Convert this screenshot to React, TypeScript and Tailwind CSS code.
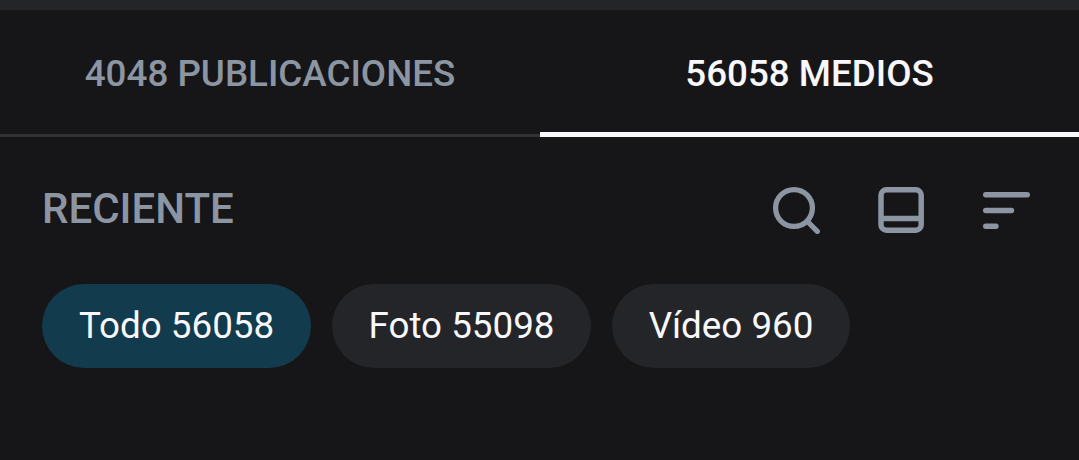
const tabs = [
  { label: "4048 PUBLICACIONES", active: false },
  { label: "56058 MEDIOS", active: true },
];

const filters = [
  { label: "Todo 56058", width: "w-[269px]", active: true },
  { label: "Foto 55098", width: "w-[259px]", active: false },
  { label: "Vídeo 960", width: "w-[238px]", active: false },
];

function SearchIcon() {
  return (
    <svg width="50" height="50" viewBox="0 0 50 50" fill="none" stroke="currentColor" strokeWidth="5.3" strokeLinecap="round">
      <circle cx="22" cy="23" r="18.4" />
      <path d="M35.5 36.5L45.3 46.3" />
    </svg>
  );
}

function LayoutIcon() {
  return (
    <svg width="46" height="46" viewBox="0 0 46 46" fill="none" stroke="currentColor" strokeWidth="5.5">
      <rect x="3" y="2.75" width="40.2" height="40.4" rx="5.5" />
      <path d="M3 31.5H43" />
    </svg>
  );
}

function SortIcon() {
  return (
    <svg width="48" height="40" viewBox="0 0 48 40" fill="none" stroke="currentColor" strokeWidth="5.4" strokeLinecap="round">
      <path d="M3.7 4.7H45.3M3.7 20.5H29.5M3.7 36.3H14" />
    </svg>
  );
}

export default function App() {
  return (
    <main className="h-[460px] w-[1079px] overflow-hidden bg-[#161618] font-['Roboto',sans-serif]">
      <div className="h-2.5 bg-[#242529]" />

      <nav className="grid h-[127px] grid-cols-[540px_539px]">
        {tabs.map((tab) => (
          <button
            key={tab.label}
            className={`flex items-center justify-center text-[36.75px] font-medium ${
              tab.active
                ? "border-b-5 border-[#f8f8fc] pt-1.5 text-[#f8f8fc]"
                : "border-b-3 border-[#303236] pt-1 text-[#8c96a3]"
            }`}
          >
            {tab.label}
          </button>
        ))}
      </nav>

      <div className="mb-px flex h-[146px] items-center pr-[49px] pl-[42px] text-[#8c96a3]">
        <h2 className="pb-[3px] text-[42px] font-medium">RECIENTE</h2>
        <div className="ml-auto flex items-center">
          <button className="mr-[56px]" aria-label="Buscar">
            <SearchIcon />
          </button>
          <button className="mr-[58px]" aria-label="Vista">
            <LayoutIcon />
          </button>
          <button aria-label="Ordenar">
            <SortIcon />
          </button>
        </div>
      </div>

      <div className="flex gap-[21px] pl-[42px]">
        {filters.map((filter) => (
          <button
            key={filter.label}
            className={`h-[84px] rounded-full text-[36.75px] text-[#f8f8fc] ${filter.width} ${
              filter.active ? "bg-[#123b4d]" : "bg-[#242529]"
            }`}
          >
            {filter.label}
          </button>
        ))}
      </div>
    </main>
  );
}
